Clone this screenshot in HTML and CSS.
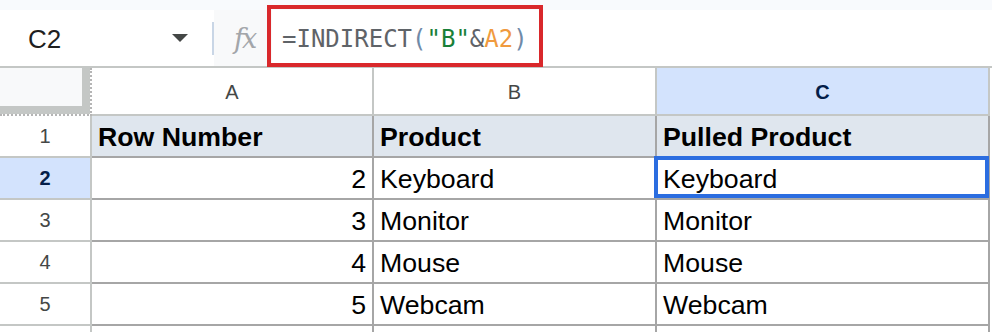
FILE: index.html
```html
<!DOCTYPE html>
<html lang="en">
<head>
  <meta charset="UTF-8">
  <title>INDIRECT example</title>
  <link rel="stylesheet" href="styles.css">
</head>
<body>
  <div class="sheet">
    <div class="top-strip"></div>
    <div class="toolbar">
      <div class="namebox">
        <span class="ref">C2</span>
        <span class="caret"></span>
        <span class="sep"></span>
      </div>
      <div class="fx">fx</div>
      <div class="formula"><span class="fn">=INDIRECT</span><span class="paren">(</span><span class="str">"B"</span><span class="fn">&amp;</span><span class="range">A2</span><span class="paren">)</span></div>
    </div>

    <div class="grid">
      <div class="corner"><div class="corner-fill"></div></div>
      <div class="colhead">A</div>
      <div class="colhead">B</div>
      <div class="colhead selected">C</div>

      <div class="rowhead">1</div>
      <div class="cell title">Row Number</div>
      <div class="cell title">Product</div>
      <div class="cell title">Pulled Product</div>

      <div class="rowhead selected">2</div>
      <div class="cell num">2</div>
      <div class="cell">Keyboard</div>
      <div class="cell active">Keyboard</div>

      <div class="rowhead">3</div>
      <div class="cell num">3</div>
      <div class="cell">Monitor</div>
      <div class="cell">Monitor</div>

      <div class="rowhead">4</div>
      <div class="cell num">4</div>
      <div class="cell">Mouse</div>
      <div class="cell">Mouse</div>

      <div class="rowhead">5</div>
      <div class="cell num">5</div>
      <div class="cell">Webcam</div>
      <div class="cell">Webcam</div>

      <div class="rowhead"></div>
      <div class="cell"></div>
      <div class="cell"></div>
      <div class="cell"></div>
    </div>

    <div class="callout"></div>
  </div>
</body>
</html>
```

FILE: styles.css
```css
body {
  margin: 0;
  background: #fff;
  font-family: 'Liberation Sans', Arial, sans-serif;
  color: #000;
}
.sheet {
  position: relative;
  width: 992px;
  height: 332px;
  overflow: hidden;
}
.top-strip { height: 10px; background: #f8fafd; }

/* formula bar */
.toolbar {
  display: flex;
  height: 56px;
  border-bottom: 2px solid #c4c7c5;
}
.namebox {
  width: 214px;
  box-sizing: border-box;
  padding-left: 28px;
  display: flex;
  align-items: center;
  background: #fff;
}
.namebox .ref { font-size: 26px; color: #1f1f1f; padding-top: 2px; }
.namebox .caret {
  margin-left: auto;
  width: 0; height: 0;
  border-left: 8px solid transparent;
  border-right: 8px solid transparent;
  border-top: 8px solid #444746;
}
.namebox .sep {
  margin-left: 24px;
  width: 2px;
  height: 33px;
  background: #c9d6e6;
}
.fx {
  width: 58px;
  box-sizing: border-box;
  padding-left: 20px;
  display: flex;
  align-items: center;
  background: #f8f9fa;
  font-family: 'DejaVu Serif', 'Liberation Serif', serif;
  font-style: italic;
  font-size: 27px;
  color: #a3a6aa;
  letter-spacing: -2px;
}
.formula {
  flex: 1;
  display: flex;
  align-items: center;
  padding-left: 10px;
  padding-top: 2px;
  background: #fff;
  font-family: 'DejaVu Sans Mono', 'Liberation Mono', monospace;
  font-size: 24px;
  white-space: pre;
}
.formula .fn { color: #5f6368; }
.formula .paren { color: #6f8aa8; }
.formula .str { color: #188038; }
.formula .range { color: #f09a3e; }

/* grid */
.grid {
  display: grid;
  grid-template-columns: 92px 282px 283px 333px;
  grid-template-rows: 48px repeat(6, 42px);
}
.grid > div {
  box-sizing: border-box;
  border-right: 2px solid #a6a6a6;
  border-bottom: 2px solid #a6a6a6;
}
.corner {
  background: #c4c7c5;
  background-clip: padding-box;
}
.grid > .corner {
  border-right: 2px dotted #b5b5b5;
  border-bottom: 2px dotted #b5b5b5;
}
.corner-fill { width: 82px; height: 38px; background: #f8f9fa; }
.grid > .colhead,
.grid > .rowhead {
  border-color: #c4c7c5;
  display: flex;
  align-items: center;
  justify-content: center;
  font-size: 20px;
  color: #444746;
}
.colhead { padding-top: 2px; }
.grid > .selected {
  background: #d3e3fd;
  color: #041e49;
  font-weight: bold;
}
.cell {
  display: flex;
  align-items: flex-end;
  padding: 0 6px 4px 6px;
  font-size: 26.7px;
  line-height: 30px;
  white-space: nowrap;
}
.cell.title { background: #dfe6ee; font-weight: bold; }
.cell.num { justify-content: flex-end; }
.cell.active { position: relative; }
.cell.active::after {
  content: '';
  position: absolute;
  top: -2px; left: -3px; right: -1px; bottom: 0;
  border: 4px solid #2b6de0;
}

/* red annotation round the formula */
.callout {
  position: absolute;
  left: 267px; top: 5px;
  width: 276px; height: 62px;
  box-sizing: border-box;
  border: 4px solid #d9282b;
}
```
